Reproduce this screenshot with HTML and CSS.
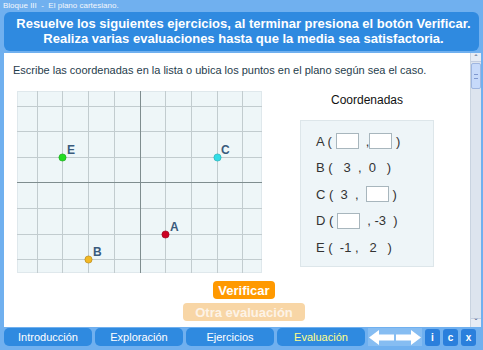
FILE: index.html
```html
<!DOCTYPE html>
<html lang="es">
<head>
  <meta charset="UTF-8">
  <title>El plano cartesiano</title>
  <link rel="stylesheet" href="styles.css">
</head>
<body>
  <div class="app">
    <div class="crumb">Bloque III &nbsp;-&nbsp; El plano cartesiano.</div>
    <div class="banner">
      Resuelve los siguientes ejercicios, al terminar presiona el botón Verificar.<br>
      Realiza varias evaluaciones hasta que la media sea satisfactoria.
    </div>
    <div class="main">
      <div class="page">
        <p class="instr">Escribe las coordenadas en la lista o ubica los puntos en el plano según sea el caso.</p>
        <div class="work">
          <svg class="plane" width="245" height="182" viewBox="0 0 245 182">
            <rect x="0.5" y="0.5" width="244" height="181" fill="#eef6f8" stroke="#dfe8ec"/>
            <g stroke="#c2cccf" stroke-width="1">
              <line x1="20.5" y1="0" x2="20.5" y2="182"/>
              <line x1="45.5" y1="0" x2="45.5" y2="182"/>
              <line x1="71.5" y1="0" x2="71.5" y2="182"/>
              <line x1="97.5" y1="0" x2="97.5" y2="182"/>
              <line x1="148.5" y1="0" x2="148.5" y2="182"/>
              <line x1="174.5" y1="0" x2="174.5" y2="182"/>
              <line x1="200.5" y1="0" x2="200.5" y2="182"/>
              <line x1="225.5" y1="0" x2="225.5" y2="182"/>
              <line x1="0" y1="15.5" x2="245" y2="15.5"/>
              <line x1="0" y1="40.5" x2="245" y2="40.5"/>
              <line x1="0" y1="66.5" x2="245" y2="66.5"/>
              <line x1="0" y1="117.5" x2="245" y2="117.5"/>
              <line x1="0" y1="143.5" x2="245" y2="143.5"/>
              <line x1="0" y1="168.5" x2="245" y2="168.5"/>
            </g>
            <g stroke="#7f8d8f" stroke-width="1">
              <line x1="123.5" y1="0" x2="123.5" y2="182"/>
              <line x1="0" y1="91.5" x2="245" y2="91.5"/>
            </g>
            <circle cx="45.5" cy="66.5" r="3.6" fill="#22dd22" stroke="#18a018" stroke-width="0.6"/>
            <circle cx="200.5" cy="66.5" r="3.6" fill="#33dde6" stroke="#20a8b0" stroke-width="0.6"/>
            <circle cx="148.5" cy="143.5" r="3.6" fill="#cc0022" stroke="#900018" stroke-width="0.6"/>
            <circle cx="71.5" cy="168.5" r="3.6" fill="#f2b824" stroke="#b08010" stroke-width="0.6"/>
            <g class="lbl">
              <text x="50" y="63">E</text>
              <text x="204" y="63">C</text>
              <text x="153" y="140">A</text>
              <text x="76" y="165">B</text>
            </g>
          </svg>
          <div class="coords">
            <div class="title">Coordenadas</div>
            <div class="list">
              <div class="row">A ( <input type="text">  ,<input type="text"> )</div>
              <div class="row">B (   3  ,  0   )</div>
              <div class="row">C (  3  ,  <input type="text"> )</div>
              <div class="row">D ( <input type="text">  , -3  )</div>
              <div class="row">E (  -1 ,   2   )</div>
            </div>
          </div>
        </div>
        <div class="actions">
          <button class="verify">Verificar</button>
          <button class="again">Otra evaluación</button>
        </div>
      </div>
      <div class="scrollbar">
        <div class="sb-btn">&#710;</div>
        <div class="sb-thumb"><span></span></div>
        <div class="sb-track"></div>
        <div class="sb-btn">&#711;</div>
      </div>
    </div>
    <div class="nav">
      <div class="tab">Introducción</div>
      <div class="tab">Exploración</div>
      <div class="tab">Ejercicios</div>
      <div class="tab current">Evaluación</div>
      <div class="arrows">
        <svg width="25" height="15" viewBox="0 0 25 15"><polygon points="0,7.5 10,0 10,4.5 25,4.5 25,10.5 10,10.5 10,15" fill="#ffffff"/></svg>
        <svg width="25" height="15" viewBox="0 0 25 15"><polygon points="25,7.5 15,0 15,4.5 0,4.5 0,10.5 15,10.5 15,15" fill="#ffffff"/></svg>
      </div>
      <div class="sq">i</div>
      <div class="sq">c</div>
      <div class="sq">x</div>
    </div>
  </div>
</body>
</html>
```

FILE: styles.css
```css
body {
  margin: 0;
  width: 483px;
  height: 350px;
  overflow: hidden;
  background-color: #70b0ef;
  font-family: "Liberation Sans", Arial, sans-serif;
}
.app {
  display: flex;
  flex-direction: column;
  height: 350px;
}
.crumb {
  height: 12px;
  line-height: 11px;
  padding-left: 3px;
  font-size: 8px;
  color: #f4f7fc;
}
.banner {
  height: 39px;
  margin: 0 4px;
  box-sizing: border-box;
  padding-top: 5px;
  padding-left: 4px;
  background-color: #2f8ae0;
  border-radius: 6px;
  color: #ffffff;
  font-size: 13px;
  font-weight: bold;
  line-height: 14.5px;
  text-align: center;
  white-space: nowrap;
}
.main {
  display: flex;
  height: 274px;
  margin-top: 2px;
  margin-left: 4px;
  margin-right: 2px;
}
.page {
  flex: 1;
  background-color: #ffffff;
  display: flex;
  flex-direction: column;
}
.instr {
  margin: 11px 0 0 9px;
  font-size: 11px;
  line-height: 13px;
  color: #1f3d4c;
}
.work {
  display: flex;
  margin-top: 14px;
  margin-left: 13px;
}
.plane {
  display: block;
  flex: none;
}
.lbl text {
  font-family: "Liberation Sans", Arial, sans-serif;
  font-size: 12px;
  font-weight: bold;
  fill: #3a5a7c;
}
.coords {
  width: 134px;
  margin-left: 38px;
  padding-top: 2px;
}
.title {
  font-size: 12px;
  line-height: 14px;
  text-align: center;
  color: #111111;
}
.list {
  margin-top: 13px;
  padding: 7px 0 7px 15px;
  background-color: #eef5f8;
  border: 1px solid #dde6ea;
  box-sizing: border-box;
  height: 147px;
}
.row {
  height: 26.5px;
  display: flex;
  align-items: center;
  white-space: pre;
  font-size: 13px;
  color: #333333;
}
.row input {
  width: 23px;
  height: 16px;
  box-sizing: border-box;
  padding: 0;
  margin: 0;
  border: 1px solid #a8b6bd;
  background-color: #ffffff;
}
.actions {
  display: flex;
  flex-direction: column;
  align-items: center;
  gap: 4px;
  margin-top: 8px;
  padding-left: 14px;
}
button {
  font-family: "Liberation Sans", Arial, sans-serif;
  font-size: 13px;
  font-weight: bold;
  color: #ffffff;
  border: none;
  border-radius: 4px;
  cursor: pointer;
}
button.verify {
  height: 18px;
  padding: 0 5px;
  background-color: #ff9900;
}
button.again {
  height: 18px;
  width: 122px;
  background-color: #f8d6a6;
  color: #fdf3e6;
}
.scrollbar {
  width: 10px;
  display: flex;
  flex-direction: column;
  background-color: #dde4ee;
  border-left: 1px solid #c9d3e0;
}
.sb-btn {
  height: 8px;
  font-size: 9px;
  line-height: 11px;
  text-align: center;
  color: #4a5a80;
  background-color: #e6ecf5;
  border-bottom: 1px solid #c3cde0;
}
.sb-btn:last-child {
  border-bottom: none;
  border-top: 1px solid #c3cde0;
  line-height: 6px;
}
.sb-thumb {
  height: 24px;
  margin-top: 1px;
  background-color: #c7dafa;
  border: 1px solid #9fb6e0;
  border-radius: 2px;
  display: flex;
  align-items: center;
  justify-content: center;
}
.sb-thumb span {
  width: 4px;
  height: 3px;
  border-top: 1px solid #7f98d0;
  border-bottom: 1px solid #7f98d0;
}
.sb-track {
  flex: 1;
}
.nav {
  display: flex;
  align-items: center;
  gap: 3px;
  height: 18px;
  margin-top: 1px;
  margin-left: 4px;
}
.tab {
  width: 88px;
  height: 18px;
  line-height: 18px;
  background-color: #2f8ae0;
  border-radius: 5px;
  color: #ffffff;
  font-size: 11px;
  text-align: center;
}
.tab.current {
  color: #ffff88;
}
.arrows {
  display: flex;
  align-items: center;
  gap: 2px;
  height: 18px;
  padding: 0 1px;
  background-color: #86bdf2;
}
.arrows svg {
  display: block;
}
.sq {
  width: 15px;
  height: 17px;
  line-height: 17px;
  background-color: #2a7fdc;
  border-radius: 3px;
  color: #ffffff;
  font-size: 10px;
  font-weight: bold;
  text-align: center;
}
```
